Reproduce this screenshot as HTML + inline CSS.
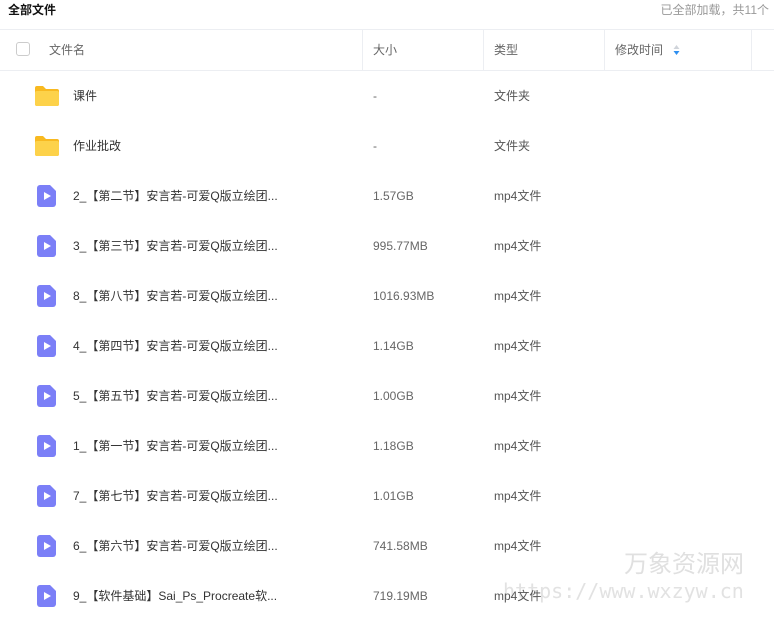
<!DOCTYPE html>
<html><head><meta charset="utf-8"><style>
*{margin:0;padding:0;box-sizing:border-box}
body{width:774px;height:626px;background:#fff;font-family:"Liberation Sans","Noto Sans CJK SC",sans-serif;font-size:12px;color:#333;position:relative;overflow:hidden}
.t{position:absolute;left:8px;top:2px;font-size:12px;font-weight:bold;color:#111;line-height:16px}
.r{position:absolute;right:5px;top:2px;font-size:12px;color:#999;line-height:16px}
.hl{position:absolute;left:0;width:774px;height:1px;background:#eceef2}
.vl{position:absolute;top:30px;height:40px;width:1px;background:#eceef2}
.h{position:absolute;top:42px;line-height:16px;color:#666}
.cb{position:absolute;left:16px;top:42px;width:14px;height:14px;border:1px solid #ccc;border-radius:3px}
.row{position:absolute;left:0;width:774px;height:50px}
.row span{position:absolute;top:17px;line-height:16px}
.n{left:73px;color:#333}
.s{left:373px;color:#666}
.k{left:494px;color:#555}
.ic{position:absolute;left:36px;top:15px}
.wm1{position:absolute;left:624px;top:551px;font-size:24px;color:#e0e0e0;line-height:28px}
.wm2{position:absolute;left:503px;top:579px;font-size:20px;color:#e2e2e2;font-family:"DejaVu Sans Mono","Liberation Mono",monospace;line-height:24px}
</style></head><body>
<div class="t">全部文件</div>
<div class="r">已全部加载，共11个</div>
<div class="hl" style="top:29px"></div>
<div class="hl" style="top:70px"></div>
<div class="vl" style="left:362px"></div>
<div class="vl" style="left:483px"></div>
<div class="vl" style="left:604px"></div>
<div class="vl" style="left:751px"></div>
<div class="cb"></div>
<div class="h" style="left:49px">文件名</div>
<div class="h" style="left:373px">大小</div>
<div class="h" style="left:494px">类型</div>
<div class="h" style="left:615px">修改时间</div>
<svg style="position:absolute;left:673px;top:45px" width="7" height="10"><path d="M3.5 0L6.5 4H0.5Z" fill="#d0d4da"/><path d="M3.5 10L6.5 6H0.5Z" fill="#2e8ff0"/></svg>

<div class="row" style="top:71px"><svg class="ic" width="26" height="22" viewBox="0 0 26 22" style="left:34px;top:14px"><path d="M1 3a2 2 0 0 1 2-2h6l3 3h11a2 2 0 0 1 2 2v13a2 2 0 0 1-2 2H3a2 2 0 0 1-2-2z" fill="#f8b920"/><rect x="1" y="6" width="24" height="15" rx="2" fill="#fdd24a"/></svg><span class="n">课件</span><span class="s">-</span><span class="k">文件夹</span></div>
<div class="row" style="top:121px"><svg class="ic" width="26" height="22" viewBox="0 0 26 22" style="left:34px;top:14px"><path d="M1 3a2 2 0 0 1 2-2h6l3 3h11a2 2 0 0 1 2 2v13a2 2 0 0 1-2 2H3a2 2 0 0 1-2-2z" fill="#f8b920"/><rect x="1" y="6" width="24" height="15" rx="2" fill="#fdd24a"/></svg><span class="n">作业批改</span><span class="s">-</span><span class="k">文件夹</span></div>

<div class="row" style="top:171px"><svg class="ic" width="20" height="22" viewBox="0 0 20 22" style="left:37px;top:14px"><path d="M3 0h10l6 6v13a3 3 0 0 1-3 3H3a3 3 0 0 1-3-3V3a3 3 0 0 1 3-3z" fill="#7b7ff7"/><path d="M7 7l7 4-7 4z" fill="#fff"/></svg><span class="n">2_【第二节】安言若-可爱Q版立绘团...</span><span class="s">1.57GB</span><span class="k">mp4文件</span></div>
<div class="row" style="top:221px"><svg class="ic" width="20" height="22" viewBox="0 0 20 22" style="left:37px;top:14px"><path d="M3 0h10l6 6v13a3 3 0 0 1-3 3H3a3 3 0 0 1-3-3V3a3 3 0 0 1 3-3z" fill="#7b7ff7"/><path d="M7 7l7 4-7 4z" fill="#fff"/></svg><span class="n">3_【第三节】安言若-可爱Q版立绘团...</span><span class="s">995.77MB</span><span class="k">mp4文件</span></div>
<div class="row" style="top:271px"><svg class="ic" width="20" height="22" viewBox="0 0 20 22" style="left:37px;top:14px"><path d="M3 0h10l6 6v13a3 3 0 0 1-3 3H3a3 3 0 0 1-3-3V3a3 3 0 0 1 3-3z" fill="#7b7ff7"/><path d="M7 7l7 4-7 4z" fill="#fff"/></svg><span class="n">8_【第八节】安言若-可爱Q版立绘团...</span><span class="s">1016.93MB</span><span class="k">mp4文件</span></div>
<div class="row" style="top:321px"><svg class="ic" width="20" height="22" viewBox="0 0 20 22" style="left:37px;top:14px"><path d="M3 0h10l6 6v13a3 3 0 0 1-3 3H3a3 3 0 0 1-3-3V3a3 3 0 0 1 3-3z" fill="#7b7ff7"/><path d="M7 7l7 4-7 4z" fill="#fff"/></svg><span class="n">4_【第四节】安言若-可爱Q版立绘团...</span><span class="s">1.14GB</span><span class="k">mp4文件</span></div>
<div class="row" style="top:371px"><svg class="ic" width="20" height="22" viewBox="0 0 20 22" style="left:37px;top:14px"><path d="M3 0h10l6 6v13a3 3 0 0 1-3 3H3a3 3 0 0 1-3-3V3a3 3 0 0 1 3-3z" fill="#7b7ff7"/><path d="M7 7l7 4-7 4z" fill="#fff"/></svg><span class="n">5_【第五节】安言若-可爱Q版立绘团...</span><span class="s">1.00GB</span><span class="k">mp4文件</span></div>
<div class="row" style="top:421px"><svg class="ic" width="20" height="22" viewBox="0 0 20 22" style="left:37px;top:14px"><path d="M3 0h10l6 6v13a3 3 0 0 1-3 3H3a3 3 0 0 1-3-3V3a3 3 0 0 1 3-3z" fill="#7b7ff7"/><path d="M7 7l7 4-7 4z" fill="#fff"/></svg><span class="n">1_【第一节】安言若-可爱Q版立绘团...</span><span class="s">1.18GB</span><span class="k">mp4文件</span></div>
<div class="row" style="top:471px"><svg class="ic" width="20" height="22" viewBox="0 0 20 22" style="left:37px;top:14px"><path d="M3 0h10l6 6v13a3 3 0 0 1-3 3H3a3 3 0 0 1-3-3V3a3 3 0 0 1 3-3z" fill="#7b7ff7"/><path d="M7 7l7 4-7 4z" fill="#fff"/></svg><span class="n">7_【第七节】安言若-可爱Q版立绘团...</span><span class="s">1.01GB</span><span class="k">mp4文件</span></div>
<div class="row" style="top:521px"><svg class="ic" width="20" height="22" viewBox="0 0 20 22" style="left:37px;top:14px"><path d="M3 0h10l6 6v13a3 3 0 0 1-3 3H3a3 3 0 0 1-3-3V3a3 3 0 0 1 3-3z" fill="#7b7ff7"/><path d="M7 7l7 4-7 4z" fill="#fff"/></svg><span class="n">6_【第六节】安言若-可爱Q版立绘团...</span><span class="s">741.58MB</span><span class="k">mp4文件</span></div>
<div class="wm1">万象资源网</div>
<div class="wm2">https://www.wxzyw.cn</div>
<div class="row" style="top:571px"><svg class="ic" width="20" height="22" viewBox="0 0 20 22" style="left:37px;top:14px"><path d="M3 0h10l6 6v13a3 3 0 0 1-3 3H3a3 3 0 0 1-3-3V3a3 3 0 0 1 3-3z" fill="#7b7ff7"/><path d="M7 7l7 4-7 4z" fill="#fff"/></svg><span class="n">9_【软件基础】Sai_Ps_Procreate软...</span><span class="s">719.19MB</span><span class="k">mp4文件</span></div>
</body></html>
